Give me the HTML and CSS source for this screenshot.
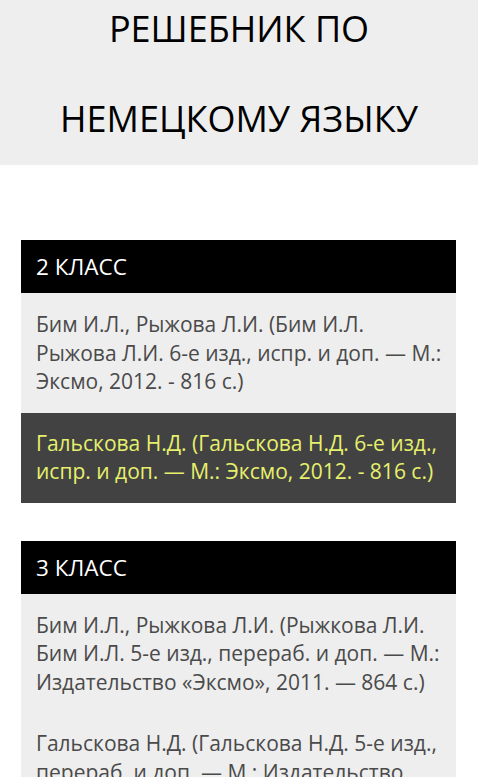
FILE: index.html
```html
<!DOCTYPE html>
<html lang="ru">
<head>
<meta charset="utf-8">
<title>Решебник по немецкому языку</title>
<link rel="stylesheet" href="styles.css">
</head>
<body>
<header class="site-header">
  <h1 class="site-title">РЕШЕБНИК ПО НЕМЕЦКОМУ ЯЗЫКУ</h1>
</header>
<main class="content">
  <section class="grade">
    <h2 class="grade-title">2 КЛАСС</h2>
    <ul class="books">
      <li class="book">Бим И.Л., Рыжова Л.И. (Бим И.Л.<br>Рыжова Л.И. 6-е изд., испр. и доп. — М.:<br>Эксмо, 2012. - 816 с.)</li>
      <li class="book book-active">Гальскова Н.Д. (Гальскова Н.Д. 6-е изд.,<br>испр. и доп. — М.: Эксмо, 2012. - 816 с.)</li>
    </ul>
  </section>
  <section class="grade">
    <h2 class="grade-title">3 КЛАСС</h2>
    <ul class="books">
      <li class="book">Бим И.Л., Рыжкова Л.И. (Рыжкова Л.И.<br>Бим И.Л. 5-е изд., перераб. и доп. — М.:<br>Издательство «Эксмо», 2011. — 864 с.)</li>
      <li class="book">Гальскова Н.Д. (Гальскова Н.Д. 5-е изд.,<br>перераб. и доп. — М.: Издательство<br>«Эксмо», 2011. — 864 с.)</li>
    </ul>
  </section>
</main>
</body>
</html>
```

FILE: styles.css
```css
html, body {
  margin: 0;
  padding: 0;
  background: #ffffff;
}

body {
  font-family: "Open Sans", "Noto Sans", sans-serif;
}

.site-header {
  height: 165px;
  background: #eeeeee;
  overflow: hidden;
}

.site-title {
  margin: -16px 0 0;
  padding: 0 40px;
  font-size: 36px;
  font-weight: 400;
  line-height: 90px;
  text-align: center;
  color: #000000;
}

.content {
  padding: 75px 22px 0 21px;
}

.grade {
  margin-bottom: 38px;
}

.grade-title {
  margin: 0;
  height: 53px;
  padding-left: 15px;
  background: #000000;
  color: #ffffff;
  font-size: 22.5px;
  font-weight: 400;
  line-height: 53px;
}

.books {
  list-style: none;
  margin: 0;
  padding: 0;
}

.book {
  padding: 16px 0 17px 15px;
  background: #eeeeee;
  color: #4a4a4a;
  font-size: 21px;
  line-height: 28.5px;
  white-space: nowrap;
  overflow: hidden;
}

.book:first-child {
  padding-top: 17px;
}

.book-active {
  background: #424242;
  color: #e6f06c;
}
```
